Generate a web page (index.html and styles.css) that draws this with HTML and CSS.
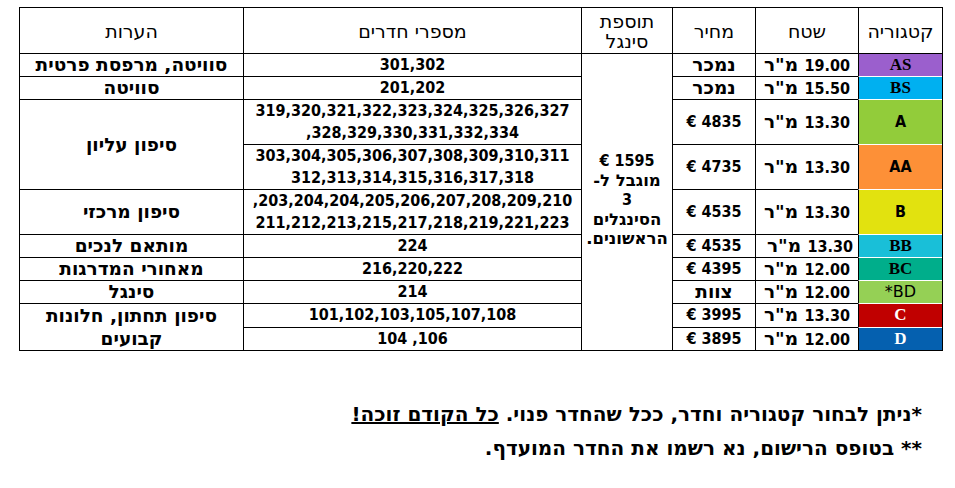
FILE: index.html
```html
<!DOCTYPE html>
<html lang="he" dir="rtl">
<head>
<meta charset="utf-8">
<title>קטגוריות חדרים</title>
<link rel="stylesheet" href="styles.css">
</head>
<body>
<div class="page">
  <table class="rooms">
    <colgroup>
      <col class="c-cat"><col class="c-area"><col class="c-price"><col class="c-single"><col class="c-nums"><col class="c-notes">
    </colgroup>
    <thead>
      <tr class="head">
        <th>קטגוריה</th>
        <th>שטח</th>
        <th>מחיר</th>
        <th>תוספת<br>סינגל</th>
        <th>מספרי חדרים</th>
        <th>הערות</th>
      </tr>
    </thead>
    <tbody>
      <tr>
        <td class="cat serif cat-as">AS</td>
        <td><span class="num">19.00</span> מ"ר</td>
        <td>נמכר</td>
        <td class="single" rowspan="10"><span class="num">1595 €</span><br>מוגבל ל-<br><span class="num">3</span><br>הסינגלים<br>הראשונים.</td>
        <td class="num">301,302</td>
        <td>סוויטה, מרפסת פרטית</td>
      </tr>
      <tr>
        <td class="cat serif cat-bs">BS</td>
        <td><span class="num">15.50</span> מ"ר</td>
        <td>נמכר</td>
        <td class="num">201,202</td>
        <td>סוויטה</td>
      </tr>
      <tr class="tall">
        <td class="cat cat-a num">A</td>
        <td><span class="num">13.30</span> מ"ר</td>
        <td class="num">4835 €</td>
        <td class="num">319,320,321,322,323,324,325,326,327<br>328,329,330,331,332,334,</td>
        <td rowspan="2">סיפון עליון</td>
      </tr>
      <tr class="tall">
        <td class="cat cat-aa num">AA</td>
        <td><span class="num">13.30</span> מ"ר</td>
        <td class="num">4735 €</td>
        <td class="num">303,304,305,306,307,308,309,310,311<br>312,313,314,315,316,317,318</td>
      </tr>
      <tr class="tall">
        <td class="cat cat-b num">B</td>
        <td><span class="num">13.30</span> מ"ר</td>
        <td class="num">4535 €</td>
        <td class="num">203,204,204,205,206,207,208,209,210,<br>211,212,213,215,217,218,219,221,223</td>
        <td>סיפון מרכזי</td>
      </tr>
      <tr>
        <td class="cat serif cat-bb">BB</td>
        <td class="nudge"><span class="num">13.30</span> מ"ר</td>
        <td class="num">4535 €</td>
        <td class="num">224</td>
        <td>מותאם לנכים</td>
      </tr>
      <tr>
        <td class="cat serif cat-bc">BC</td>
        <td><span class="num">12.00</span> מ"ר</td>
        <td class="num">4395 €</td>
        <td class="num">216,220,222</td>
        <td>מאחורי המדרגות</td>
      </tr>
      <tr>
        <td class="cat light cat-bd">BD*</td>
        <td><span class="num">12.00</span> מ"ר</td>
        <td>צוות</td>
        <td class="num">214</td>
        <td>סינגל</td>
      </tr>
      <tr>
        <td class="cat serif cat-c">C</td>
        <td><span class="num">13.30</span> מ"ר</td>
        <td class="num">3995 €</td>
        <td class="num">101,102,103,105,107,108</td>
        <td rowspan="2" class="notes-wrap">סיפון תחתון, חלונות קבועים</td>
      </tr>
      <tr>
        <td class="cat serif cat-d end">D</td>
        <td><span class="num">12.00</span> מ"ר</td>
        <td class="num">3895 €</td>
        <td class="num">106, 104</td>
      </tr>
    </tbody>
  </table>

  <div class="footnotes">
    <p>*ניתן לבחור קטגוריה וחדר, ככל שהחדר פנוי. <span class="ul">כל הקודם זוכה!</span></p>
    <p>** בטופס הרישום, נא רשמו את החדר המועדף.</p>
  </div>
</div>
</body>
</html>
```

FILE: styles.css
```css
html, body {
  margin: 0;
  padding: 0;
  background: #fff;
}

body {
  font-family: "DejaVu Sans", sans-serif;
  color: #000;
  font-size: 18.5px;
}

.num {
  font-family: "DejaVu Sans Condensed", "DejaVu Sans", sans-serif;
  font-stretch: condensed;
  font-size: 16px;
}

span.num {
  line-height: 16px;
}

.page {
  padding: 7px 12px 0 19px;
}

.rooms {
  width: 924px;
  table-layout: fixed;
  border-collapse: separate;
  border-spacing: 0;
  border-top: 1px solid #000;
  border-right: 1px solid #000;
}

.c-cat { width: 84px; }
.c-area { width: 103px; }
.c-price { width: 83px; }
.c-single { width: 91px; }
.c-nums { width: 338px; }
.c-notes { width: 224px; }

.rooms th,
.rooms td {
  border-left: 1px solid #000;
  border-bottom: 1px solid #000;
  padding: 0;
  text-align: center;
  vertical-align: middle;
  line-height: 22px;
  height: 22px;
  white-space: nowrap;
  overflow: hidden;
}

.rooms th {
  font-weight: normal;
  font-size: 19px;
  height: 45px;
  line-height: 20px;
}

.rooms td {
  font-weight: bold;
}

.rooms .tall td {
  height: 44px;
}

.rooms td.single {
  font-size: 16.5px;
  line-height: 19.6px;
  padding-bottom: 4px;
}

.rooms td.notes-wrap {
  white-space: normal;
  line-height: 23px;
  padding: 0 12px;
}

.rooms td.nudge {
  padding-left: 6px;
}

.cat {
  border-bottom-color: #fff !important;
}

.cat.end {
  border-bottom-color: #000 !important;
}

.serif {
  font-family: "Liberation Serif", serif;
  font-size: 17px;
}

.light {
  font-weight: normal !important;
  font-size: 16px;
}

.cat-as { background: #9b5fcd; }
.cat-bs { background: #00b0f0; }
.cat-a { background: #92cc3a; }
.cat-aa { background: #fd9037; }
.cat-b { background: #e2e20f; }
.cat-bb { background: #19bfd8; }
.cat-bc { background: #00ae8b; }
.cat-bd { background: #95d055; }
.cat-c { background: #c00000; color: #fff; }
.cat-d { background: #0560af; color: #fff; }

.footnotes {
  margin-top: 46px;
  padding-right: 21px;
  font-weight: bold;
  font-size: 20px;
}

.footnotes p {
  margin: 0;
  line-height: 34px;
}

.ul {
  text-decoration: underline;
}
```
